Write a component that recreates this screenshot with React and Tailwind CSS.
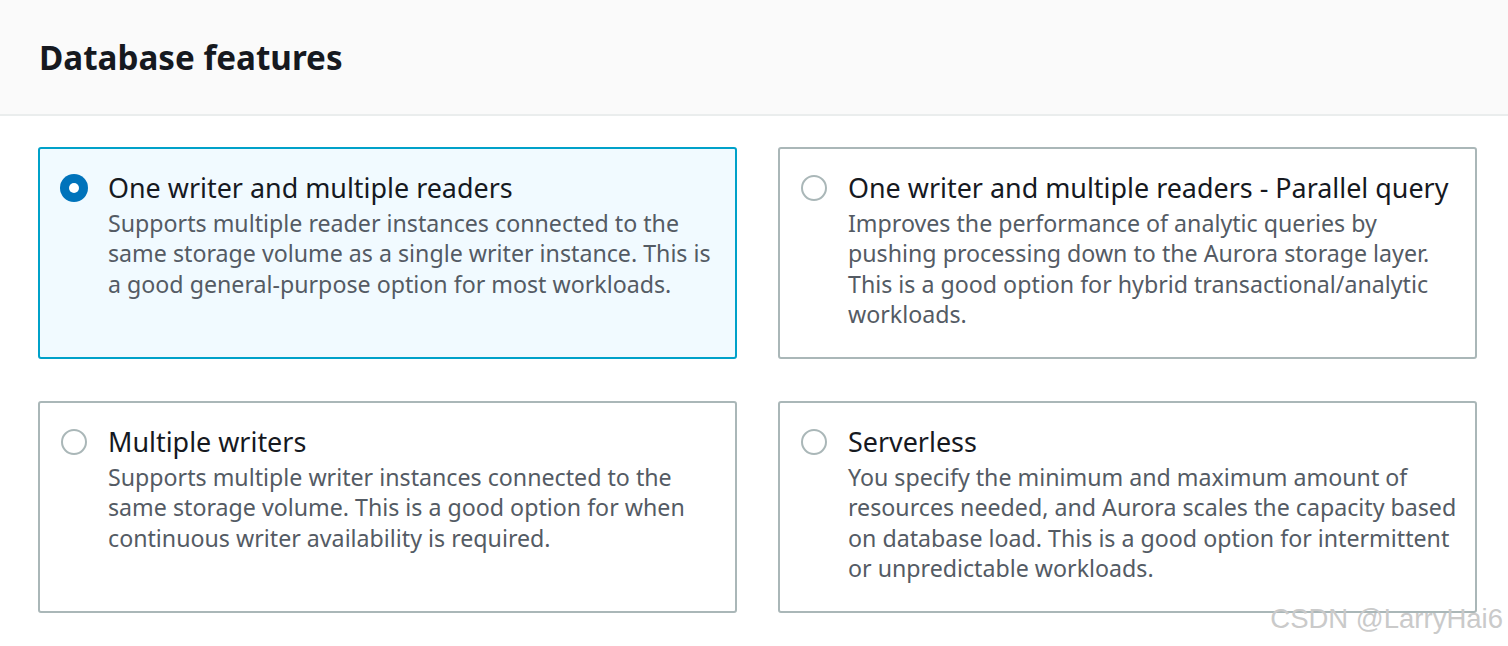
import React, { useState } from "react";

const options = [
  {
    id: "single",
    title: "One writer and multiple readers",
    desc: [
      "Supports multiple reader instances connected to the",
      "same storage volume as a single writer instance. This is",
      "a good general-purpose option for most workloads.",
    ],
  },
  {
    id: "parallel",
    title: "One writer and multiple readers - Parallel query",
    desc: [
      "Improves the performance of analytic queries by",
      "pushing processing down to the Aurora storage layer.",
      "This is a good option for hybrid transactional/analytic",
      "workloads.",
    ],
  },
  {
    id: "multi",
    title: "Multiple writers",
    desc: [
      "Supports multiple writer instances connected to the",
      "same storage volume. This is a good option for when",
      "continuous writer availability is required.",
    ],
  },
  {
    id: "serverless",
    title: "Serverless",
    desc: [
      "You specify the minimum and maximum amount of",
      "resources needed, and Aurora scales the capacity based",
      "on database load. This is a good option for intermittent",
      "or unpredictable workloads.",
    ],
  },
];

function Radio({ checked }) {
  if (checked) {
    return (
      <span className="mt-[6px] flex h-[28px] w-[28px] shrink-0 items-center justify-center rounded-full bg-[#0073bb]">
        <span className="h-[10px] w-[10px] rounded-full bg-white" />
      </span>
    );
  }
  return (
    <span className="mt-[7px] ml-[1px] mr-[1px] h-[26px] w-[26px] shrink-0 rounded-full border-2 border-[#aab7b8] bg-white" />
  );
}

function OptionCard({ opt, checked, onSelect }) {
  return (
    <button
      type="button"
      onClick={onSelect}
      className={
        "flex h-[212px] items-start gap-[20px] rounded-[3px] border-2 pl-[20px] pt-[19px] text-left " +
        (checked ? "border-[#00a1c9] bg-[#f1faff]" : "border-[#aab7b8] bg-white")
      }
    >
      <Radio checked={checked} />
      <div>
        <div className="text-[26.9px] leading-[40px] text-[#16191f]">{opt.title}</div>
        <div className="text-[23.2px] leading-[30.3px] text-[#545b64]">
          {opt.desc.map((line, i) => (
            <div key={i}>{line}</div>
          ))}
        </div>
      </div>
    </button>
  );
}

export default function App() {
  const [selected, setSelected] = useState("single");

  return (
    <div className="relative h-[646px] w-[1508px] overflow-hidden bg-white font-['Noto_Sans',sans-serif]">
      <div className="flex h-[116px] items-center border-b-2 border-[#eaeded] bg-[#fafafa] px-[39px]">
        <h2 className="pt-[2px] text-[33.2px] font-bold leading-none text-[#16191f]">Database features</h2>
      </div>

      <div className="grid w-[1477px] grid-cols-2 gap-x-[41px] gap-y-[42px] pl-[38px] pt-[31px]">
        {options.map((opt) => (
          <OptionCard
            key={opt.id}
            opt={opt}
            checked={selected === opt.id}
            onSelect={() => setSelected(opt.id)}
          />
        ))}
      </div>

      {/* watermark */}
      <div className="absolute right-[5px] top-[604px] font-['Liberation_Sans',sans-serif] text-[27.5px] leading-[30px] text-[#cacaca]">
        CSDN @LarryHai6
      </div>
    </div>
  );
}
